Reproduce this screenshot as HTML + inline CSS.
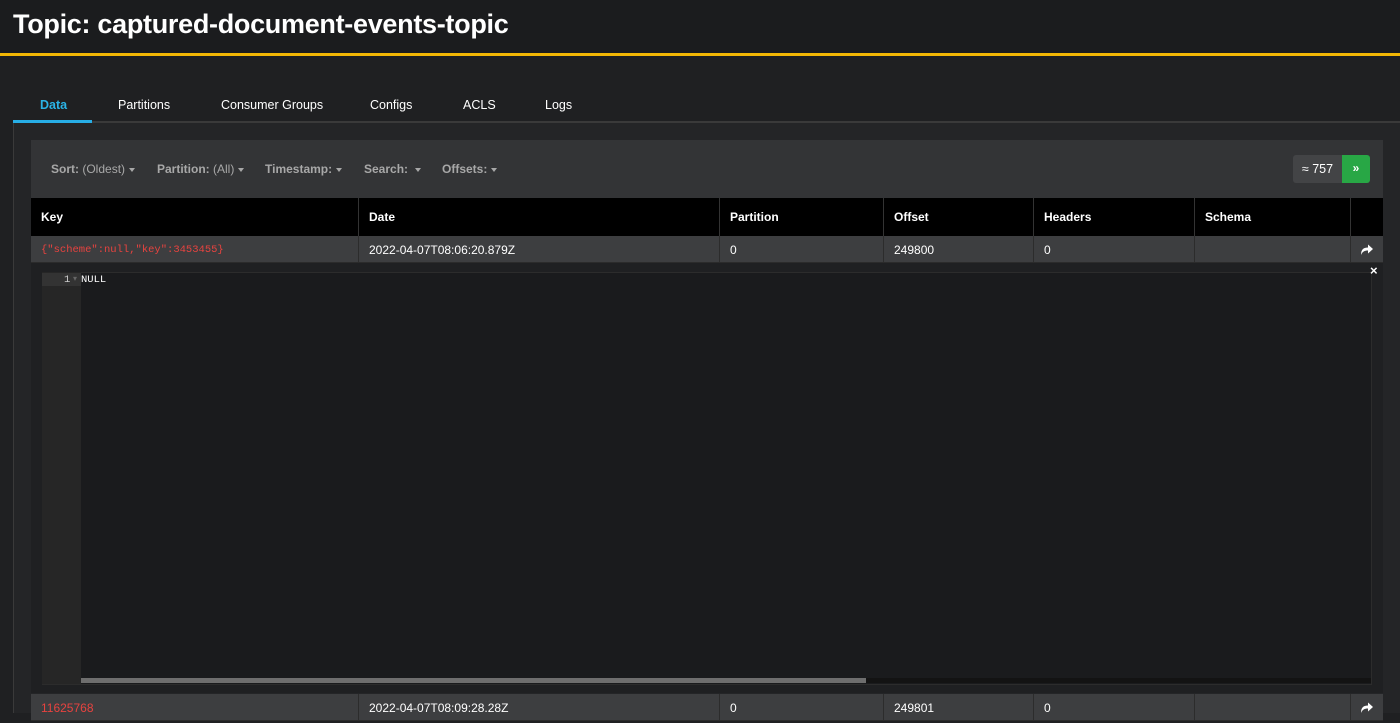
<!DOCTYPE html>
<html><head><meta charset="utf-8"><style>
*{margin:0;padding:0;box-sizing:border-box}
body{width:1400px;height:713px;overflow:hidden;background:#1f2022;font-family:"Liberation Sans",sans-serif;color:#fff;position:relative}
.hdr{position:absolute;left:0;top:0;width:1400px;height:53px;background:#1b1c1e}
.hdr h1{position:absolute;left:13px;top:9px;font-size:27px;font-weight:bold;letter-spacing:-0.3px}
.yl{position:absolute;left:0;top:53px;width:1400px;height:3px;background:#f2b705}
.tabs{position:absolute;left:0;top:98px;font-size:12.5px}
.tabs span{position:absolute;top:0;white-space:nowrap}
.tabline{position:absolute;left:13px;top:121px;width:1387px;height:2px;background:#3a3a3a}
.act{position:absolute;left:13px;top:120px;width:79px;height:3px;background:#27aee6}
.panel{position:absolute;left:13px;top:123px;width:1387px;height:590px;background:#242527;border-left:1px solid #3a3a3a}
.tool{position:absolute;left:31px;top:140px;width:1352px;height:58px;background:#333436}
.tool span{position:absolute;top:22px;font-size:12px;color:#a8a8a8;font-weight:bold;white-space:nowrap}
.tool span i{font-style:normal;font-weight:normal}
.car{display:inline-block;border-left:3.5px solid transparent;border-right:3.5px solid transparent;border-top:4px solid #a8a8a8;vertical-align:middle;margin-left:4px}
.cnt{position:absolute;left:1293px;top:155px;width:49px;height:28px;background:#434446;border-radius:3px 0 0 3px;font-size:12.5px;text-align:center;line-height:28px}
.go{position:absolute;left:1342px;top:155px;width:28px;height:28px;background:#28a745;border-radius:0 3px 3px 0;font-size:12px;text-align:center;line-height:27px;font-weight:bold}
.th{position:absolute;left:31px;top:198px;width:1352px;height:38px;background:#000}
.row{position:absolute;left:31px;width:1352px;height:27px;background:#3d3e40;border-bottom:1px solid #2b2b2b}
.c{position:absolute;top:0;height:100%;border-left:1px solid #2c2c2c;font-size:12px;padding-left:10px;white-space:nowrap}
.th .c{line-height:38px;font-weight:bold;border-left:1px solid #333}
.row .c{line-height:29px}
.red{color:#e8433f;font-family:"Liberation Mono",monospace;font-size:10.5px}
.ed{position:absolute;left:31px;top:263px;width:1352px;height:430px;background:#1f2022}
.edi{position:absolute;left:42px;top:272px;width:1330px;height:413px;background:#1a1b1d;border:1px solid #2c2c2c}
.gut{position:absolute;left:42px;top:272px;width:39px;height:412px;background:#262626}
.gact{position:absolute;left:42px;top:273px;width:39px;height:13px;background:#333}
.mono{font-family:"Liberation Mono",monospace;font-size:10.5px;position:absolute}
.sb{position:absolute;left:81px;top:678px;width:785px;height:5px;background:#6e6e6e}
.sbt{position:absolute;left:81px;top:678px;width:1290px;height:5px;background:#131313}
.ic{position:absolute;left:1330px;top:8px}
</style></head><body>
<div class="hdr"><h1>Topic: captured-document-events-topic</h1></div>
<div class="yl"></div>
<div class="panel"></div>
<div class="tabline"></div><div class="act"></div>
<div class="tabs">
<span style="left:40px;color:#2bb3e6;font-weight:bold">Data</span>
<span style="left:118px">Partitions</span>
<span style="left:221px">Consumer Groups</span>
<span style="left:370px">Configs</span>
<span style="left:463px">ACLS</span>
<span style="left:545px">Logs</span>
</div>
<div class="tool">
<span style="left:20px">Sort: <i>(Oldest)</i><b class="car"></b></span>
<span style="left:126px">Partition: <i>(All)</i><b class="car"></b></span>
<span style="left:234px">Timestamp:<b class="car"></b></span>
<span style="left:333px">Search: <b class="car"></b></span>
<span style="left:411px">Offsets:<b class="car"></b></span>
</div>
<div class="cnt">≈ 757</div><div class="go">»</div>
<div class="th">
<div class="c" style="left:0;border-left:none">Key</div>
<div class="c" style="left:327px">Date</div>
<div class="c" style="left:688px">Partition</div>
<div class="c" style="left:852px">Offset</div>
<div class="c" style="left:1002px">Headers</div>
<div class="c" style="left:1163px">Schema</div>
<div class="c" style="left:1319px"></div>
</div>
<div class="row" style="top:236px">
<div class="c red" style="left:0;border-left:none">{"scheme":null,"key":3453455}</div>
<div class="c" style="left:327px">2022-04-07T08:06:20.879Z</div>
<div class="c" style="left:688px">0</div>
<div class="c" style="left:852px">249800</div>
<div class="c" style="left:1002px">0</div>
<div class="c" style="left:1163px"></div>
<div class="c" style="left:1319px"></div>
<svg class="ic" width="12" height="11" viewBox="0 0 12 11"><path d="M0 11 C0 5 3 3.5 7 3.5 V0.5 L12 5 L7 9.5 V6.5 C3.5 6.5 1.5 7.5 0 11Z" fill="#fff"/></svg>
</div>
<div class="ed"></div>
<div class="edi"></div>
<div class="gut"></div><div class="gact"></div>
<div class="mono" style="left:64px;top:274px;color:#ccc">1</div>
<div class="mono" style="left:73px;top:274px;color:#666;font-size:8px">▾</div>
<div class="mono" style="left:81px;top:274px;color:#fff">NULL</div>
<div class="sbt"></div><div class="sb"></div>
<div style="position:absolute;left:1370px;top:263px;font-size:13px;font-weight:bold">×</div>
<div class="row" style="top:694px;height:27px">
<div class="c red" style="left:0;border-left:none;font-family:'Liberation Sans',sans-serif;font-size:12px">11625768</div>
<div class="c" style="left:327px">2022-04-07T08:09:28.28Z</div>
<div class="c" style="left:688px">0</div>
<div class="c" style="left:852px">249801</div>
<div class="c" style="left:1002px">0</div>
<div class="c" style="left:1163px"></div>
<div class="c" style="left:1319px"></div>
<svg class="ic" width="12" height="11" viewBox="0 0 12 11"><path d="M0 11 C0 5 3 3.5 7 3.5 V0.5 L12 5 L7 9.5 V6.5 C3.5 6.5 1.5 7.5 0 11Z" fill="#fff"/></svg>
</div>
</body></html>
